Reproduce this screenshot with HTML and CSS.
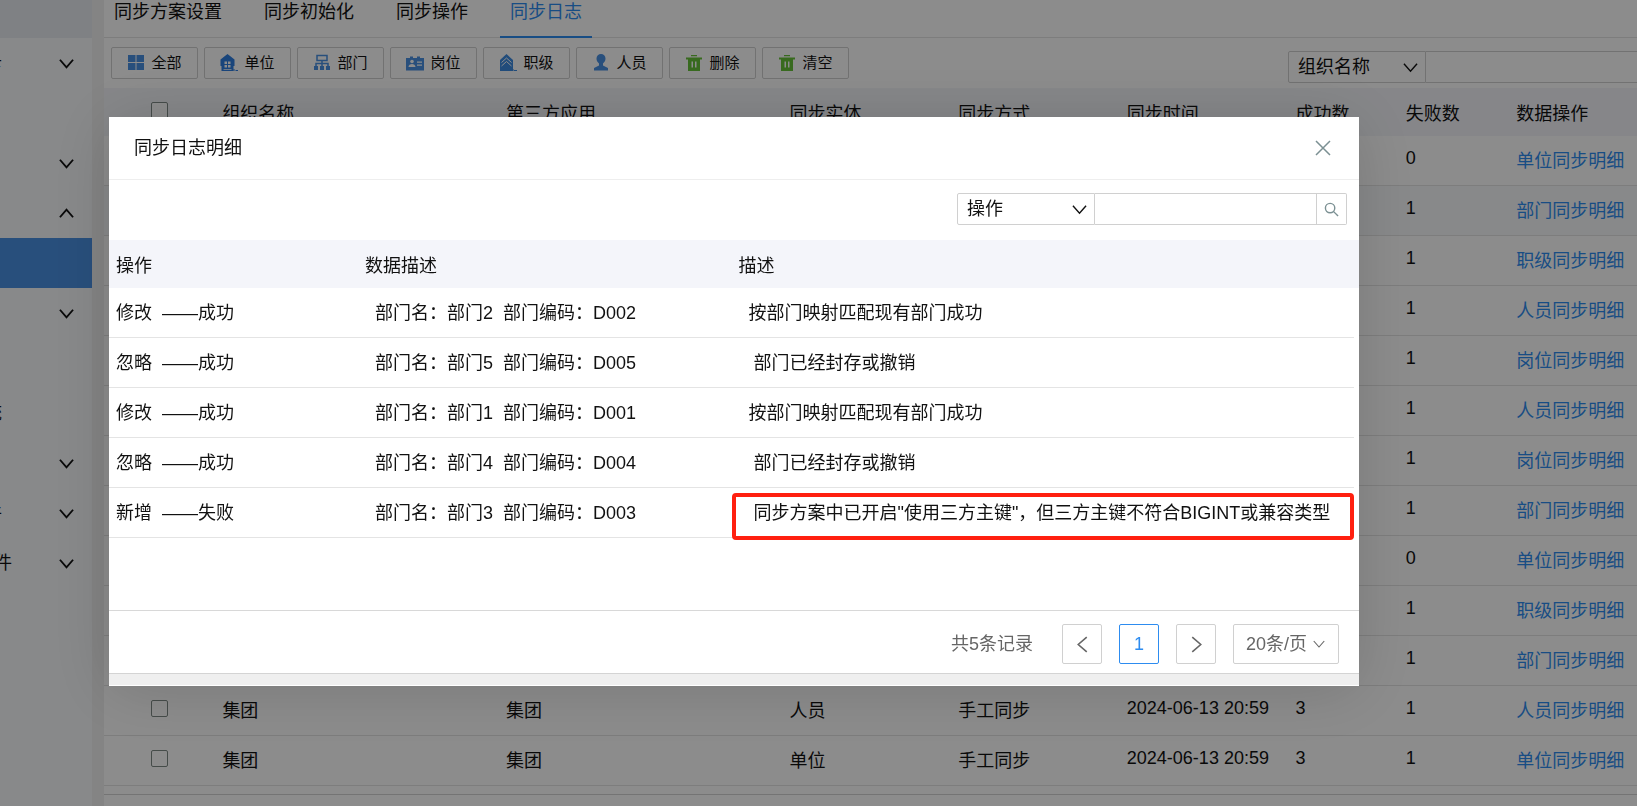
FILE: index.html
```html
<!DOCTYPE html>
<html lang="zh-CN">
  <head>
    <meta charset="UTF-8" />
    <meta name="viewport" content="width=device-width, initial-scale=1.0" />
    <title>同步日志</title>
    <link rel="stylesheet" href="styles.css">
  </head>
  <body>
    <!-- 公用图标 -->
    <svg class="symbols" aria-hidden="true">
      <symbol id="down" viewBox="0 0 16 16"><path d="M1 4 8 12 15 4" /></symbol>
      <symbol id="trash" viewBox="0 0 18 18">
        <path fill="#67c23a" d="M1 3.500h16v2H1zM6 1h6v1.200H6zM3 5.500h12V17H3z" />
        <path fill="#fff" d="M6.500 7.500h1.500v6H6.500zM10 7.500h1.500v6H10z" />
      </symbol>
    </svg>

    <div class="layout">
      <nav class="sidebar">
        <div class="side-top"></div>
        <div class="side-item"><span class="side-label cut">卡</span><svg class="arrow"><use href="#down" /></svg></div>
        <div class="side-item"></div>
        <div class="side-item"><svg class="arrow"><use href="#down" /></svg></div>
        <div class="side-item"><svg class="arrow up"><use href="#down" /></svg></div>
        <div class="side-item active"></div>
        <div class="side-item"><svg class="arrow"><use href="#down" /></svg></div>
        <div class="side-item"></div>
        <div class="side-item"><span class="side-label cut">统</span></div>
        <div class="side-item"><svg class="arrow"><use href="#down" /></svg></div>
        <div class="side-item"><span class="side-label cut">件</span><svg class="arrow"><use href="#down" /></svg></div>
        <div class="side-item"><span class="side-label">件</span><svg class="arrow"><use href="#down" /></svg></div>
      </nav>

      <main class="main">
        <div class="tabs">
          <a class="tab" href="#">同步方案设置</a>
          <a class="tab" href="#">同步初始化</a>
          <a class="tab" href="#">同步操作</a>
          <a class="tab active" href="#">同步日志</a>
        </div>

        <div class="toolbar">
          <div class="buttons">
            <button class="tool-button" type="button">
              <svg class="icon" viewBox="0 0 18 18"><path fill="#4a90e2" d="M1 1h7.500v7H1zM9.500 1H17v7H9.500zM1 9h7.500v7H1zM9.500 9H17v7H9.500z" /></svg>全部
            </button>
            <button class="tool-button" type="button">
              <svg class="icon" viewBox="0 0 18 18"><path fill="#2f7ee0" d="M7.500 0 .5 5.500V12h1v5h12v-5h1V5.500z" /><path fill="#fff" d="M4.500 7.500H7V10H4.500zM8 7.500h2.500V10H8zM4.500 11H7v2.500H4.500zM8 11h2.500v2.500H8zM3.500 15h8v.8h-8z" /><path fill="#2f7ee0" d="M13 15.500h2v1h-2zM15.500 16H18v1h-2.500z" /></svg>单位
            </button>
            <button class="tool-button" type="button">
              <svg class="icon" viewBox="0 0 18 18"><path fill="none" stroke="#4a90e2" stroke-width="1.500" d="M4 1.500h10v5H4zM9 6.500V13M3 13V9.500h12V13" /><path fill="#4a90e2" d="M1 12h4v4H1zM7 12h4v4H7zM13 12h4v4h-4z" /></svg>部门
            </button>
            <button class="tool-button" type="button">
              <svg class="icon" viewBox="0 0 18 18"><path fill="#4a90e2" d="M0 4h4V2.500h3V4h4V2.500h3V4h4v12.500H0z" /><circle cx="6" cy="7.500" r="1.800" fill="#fff" /><path fill="#fff" d="M2.500 13c0-4 7-4 7 0zM11 7.500h5v1.200h-5zM11 10.500h5v1.200h-5z" /></svg>岗位
            </button>
            <button class="tool-button" type="button">
              <svg class="icon" viewBox="0 0 18 18"><path fill="#3c8ae0" d="M7.500 0 1 6v11h13V6z" /><path fill="none" stroke="#fff" d="m2.500 8.500 5-4.500 5 4.500M2.500 12l5-4.500 5 4.500" /><path fill="#3c8ae0" d="M12 15.500h3v1h-3zM15 16h3v1h-3z" /></svg>职级
            </button>
            <button class="tool-button" type="button">
              <svg class="icon" viewBox="0 0 18 18"><path fill="#4a90e2" d="M9 0a4.500 4.500 0 0 1 4.500 4.500c0 2-.8 3.500-2.500 5v2l5 2.500v2.500H2V14l5-2.500v-2c-1.700-1.500-2.500-3-2.500-5A4.500 4.500 0 0 1 9 0z" /></svg>人员
            </button>
            <button class="tool-button" type="button"><svg class="icon"><use href="#trash" /></svg>删除</button>
            <button class="tool-button" type="button"><svg class="icon"><use href="#trash" /></svg>清空</button>
          </div>
          <div class="search page-search">
            <div class="select-box">
              <select class="search-select" aria-label="搜索条件"><option>组织名称</option></select>
              <svg class="arrow"><use href="#down" /></svg>
            </div>
            <input class="search-input" type="text" aria-label="搜索内容" />
          </div>
        </div>

        <table class="log-table">
          <colgroup>
            <col class="col-check" /><col class="col-org" /><col class="col-org" />
            <col class="col-mid" /><col class="col-mid" /><col class="col-mid" />
            <col class="col-num" /><col class="col-num" /><col />
          </colgroup>
          <thead>
            <tr>
              <th class="check"><input type="checkbox" aria-label="全选" /></th>
              <th>组织名称</th><th>第三方应用</th><th>同步实体</th><th>同步方式</th><th>同步时间</th><th>成功数</th><th>失败数</th><th>数据操作</th>
            </tr>
          </thead>
          <tbody id="logRows"></tbody>
        </table>
        <div class="table-end"></div>
      </main>
    </div>

    <!-- 明细弹窗 -->
    <div class="mask">
      <div class="dialog" role="dialog" aria-labelledby="dialogTitle">
        <div class="dialog-header">
          <div id="dialogTitle">同步日志明细</div>
          <button class="close" type="button" aria-label="关闭">
            <svg viewBox="0 0 16 16"><path d="m1 1 14 14M15 1 1 15" /></svg>
          </button>
        </div>
        <div class="dialog-tools">
          <div class="search">
            <div class="select-box">
              <select class="search-select" aria-label="明细搜索条件"><option>操作</option></select>
              <svg class="arrow"><use href="#down" /></svg>
            </div>
            <input class="search-input" type="text" aria-label="明细搜索内容" />
            <button class="search-button" type="button" aria-label="搜索">
              <svg viewBox="0 0 16 16"><circle cx="6.500" cy="6.500" r="5" /><path d="m10 10 5 5" /></svg>
            </button>
          </div>
        </div>
        <div class="dialog-body">
          <table class="detail-table">
            <colgroup><col class="col-action" /><col class="col-data" /><col /></colgroup>
            <thead>
              <tr><th>操作</th><th>数据描述</th><th>描述</th></tr>
            </thead>
            <tbody>
              <tr><td>修改&nbsp; ——成功</td><td>&nbsp; 部门名：部门2&nbsp; 部门编码：D002</td><td>&nbsp; 按部门映射匹配现有部门成功</td></tr>
              <tr><td>忽略&nbsp; ——成功</td><td>&nbsp; 部门名：部门5&nbsp; 部门编码：D005</td><td>&nbsp;&nbsp; 部门已经封存或撤销</td></tr>
              <tr><td>修改&nbsp; ——成功</td><td>&nbsp; 部门名：部门1&nbsp; 部门编码：D001</td><td>&nbsp; 按部门映射匹配现有部门成功</td></tr>
              <tr><td>忽略&nbsp; ——成功</td><td>&nbsp; 部门名：部门4&nbsp; 部门编码：D004</td><td>&nbsp;&nbsp; 部门已经封存或撤销</td></tr>
              <tr><td>新增&nbsp; ——失败</td><td>&nbsp; 部门名：部门3&nbsp; 部门编码：D003</td><td class="marked">&nbsp;&nbsp; 同步方案中已开启"使用三方主键"，但三方主键不符合BIGINT或兼容类型</td></tr>
            </tbody>
          </table>
        </div>
        <div class="pager">
          <span class="total">共5条记录</span>
          <button class="page-button" type="button" aria-label="上一页"><svg class="arrow prev"><use href="#down" /></svg></button>
          <button class="page-button current" type="button">1</button>
          <button class="page-button" type="button" aria-label="下一页"><svg class="arrow next"><use href="#down" /></svg></button>
          <div class="select-box page-size">
            <select aria-label="每页条数"><option>20条/页</option></select>
            <svg class="arrow"><use href="#down" /></svg>
          </div>
        </div>
        <div class="dialog-footer"></div>
      </div>
    </div>

    <script>
      // 实体、成功数、失败数
      const logs = [
        ["单位", 3, 0],
        ["部门", 3, 1],
        ["职级", 3, 1],
        ["人员", 3, 1],
        ["岗位", 3, 1],
        ["人员", 3, 1],
        ["岗位", 3, 1],
        ["部门", 3, 1],
        ["单位", 3, 0],
        ["职级", 3, 1],
        ["部门", 3, 1],
        ["人员", 3, 1],
        ["单位", 3, 1],
      ];
      document.getElementById("logRows").innerHTML = logs
        .map(
          ([entity, success, fail], index) => `
        <tr class="${index === 1 ? "hover" : ""}">
          <td class="check"><input type="checkbox" aria-label="选择" /></td>
          <td>集团</td>
          <td>集团</td>
          <td>${entity}</td>
          <td>手工同步</td>
          <td class="num">2024-06-13 20:59</td>
          <td class="num">${success}</td>
          <td class="num">${fail}</td>
          <td><a href="#">${entity}同步明细</a></td>
        </tr>`
        )
        .join("");
    </script>
  </body>
</html>
```

FILE: styles.css
```css
* {
  box-sizing: border-box;
}
body {
  margin: 0;
  height: 100vh;
  overflow: hidden;
  font-family: "Liberation Sans", "Noto Sans CJK SC", sans-serif;
  font-size: 18px;
  line-height: 24px;
  color: #111;
  background: #fff;
}
button,
input,
select {
  margin: 0;
  font: inherit;
  color: inherit;
}
a {
  color: #2d8cf0;
  text-decoration: none;
}
.symbols {
  display: none;
}
.arrow {
  width: 15px;
  height: 15px;
  fill: none;
  stroke: currentColor;
  stroke-width: 2;
}
.up {
  transform: rotate(180deg);
}

/* 页面 */
.layout {
  display: flex;
  min-height: 100vh;
  background: #f0f0f0;
}
.sidebar {
  width: 92px;
  margin-right: 12px;
  flex-shrink: 0;
  background: #f7f9fc;
}
.side-top {
  height: 38px;
  background: #e8ebf0;
}
.side-item {
  display: flex;
  align-items: center;
  height: 50px;
  padding-right: 18px;
}
.side-item.active {
  background: #4a90e2;
}
.side-item .arrow {
  margin-left: auto;
}
.side-label {
  display: flex;
  justify-content: flex-end;
  width: 12px;
  overflow: hidden;
}
.side-label.cut {
  width: 2px;
}
.main {
  flex: 1;
  min-width: 0;
  background: #fff;
}
.tabs {
  display: flex;
  gap: 22px;
  height: 38px;
  border-bottom: 1px solid #e4e4e4;
}
.tab {
  height: 38px;
  padding: 0 10px;
  color: #111;
}
.tab.active {
  color: #2d8cf0;
  border-bottom: 2px solid #2d8cf0;
}
.toolbar {
  display: flex;
  justify-content: space-between;
  height: 50px;
  padding: 9px 0 0 7px;
}
.buttons {
  display: flex;
  gap: 6px;
}
.tool-button {
  display: flex;
  align-items: center;
  justify-content: center;
  gap: 6px;
  width: 87px;
  height: 32px;
  padding: 0;
  font-size: 15px;
  background: #fff;
  border: 1px solid #d0d0d0;
  border-radius: 2px;
}
.icon {
  width: 18px;
  height: 18px;
}
.page-search {
  margin-top: 4px;
}

/* 搜索框 */
.search {
  display: flex;
  height: 32px;
}
.select-box {
  position: relative;
  width: 138px;
}
.select-box select {
  width: 100%;
  height: 100%;
  padding: 0 9px;
  appearance: none;
  background: #fff;
  border: 1px solid #d0d0d0;
  border-radius: 2px 0 0 2px;
}
.select-box .arrow {
  position: absolute;
  top: 9px;
  right: 8px;
  stroke-width: 1.5;
  pointer-events: none;
}
.search-input {
  width: 222px;
  border: 1px solid #d0d0d0;
  border-left: 0;
}
.page-search .search-input {
  width: 211px;
  border-right: 0;
}
.search-button {
  width: 30px;
  padding: 0 7px;
  line-height: 0;
  background: #fff;
  border: 1px solid #d0d0d0;
  border-left: 0;
  border-radius: 0 2px 2px 0;
}
.search-button svg {
  width: 15px;
  height: 15px;
  fill: none;
  stroke: #7b9093;
  stroke-width: 1.5;
}

/* 表格 */
table {
  width: 100%;
  table-layout: fixed;
  border-collapse: separate;
  border-spacing: 0;
}
th {
  height: 48px;
  padding: 4px 0 0 8px;
  font-weight: normal;
  text-align: left;
  background: #f4f5fa;
}
td {
  height: 50px;
  padding: 0 0 0 8px;
  white-space: nowrap;
  border-bottom: 1px solid #e4e4e4;
}
.hover td {
  background: #f7f9fc;
}
.log-table .check {
  padding: 0 0 6px;
  text-align: center;
}
.log-table .num {
  padding-bottom: 6px;
}
.log-table input {
  width: 17px;
  height: 17px;
  vertical-align: middle;
  appearance: none;
  background: #fff;
  border: 1px solid #7f8a86;
  border-radius: 2px;
}
.col-check,
.col-num {
  width: 7.2%;
}
.col-org {
  width: 18.5%;
}
.col-mid {
  width: 11%;
}
.table-end {
  height: 9px;
  border-bottom: 1px solid #d4d4d4;
}

/* 弹窗 */
.mask {
  position: fixed;
  inset: 0;
  padding: 117px 278px 0 109px;
  background: rgba(0, 0, 0, 0.45);
}
.dialog {
  background: #fff;
  box-shadow: 0 4px 60px rgba(0, 0, 0, 0.15);
}
.dialog-header {
  display: flex;
  align-items: center;
  justify-content: space-between;
  height: 63px;
  padding: 0 28px 0 25px;
  border-bottom: 1px solid #eee;
}
.close {
  padding: 0;
  line-height: 0;
  background: none;
  border: 0;
}
.close svg {
  width: 16px;
  height: 16px;
  fill: none;
  stroke: #7b9093;
  stroke-width: 1.5;
}
.dialog-tools {
  display: flex;
  justify-content: flex-end;
  height: 60px;
  padding: 13px 12px 0;
}
.dialog-body {
  height: 371px;
  background: linear-gradient(#f4f5fa 48px, #fff 48px);
  border-bottom: 1px solid #d8d8d8;
}
.detail-table {
  width: calc(100% - 5px);
}
.detail-table th,
.detail-table td {
  padding-left: 7px;
}
.col-action {
  width: 20%;
}
.col-data {
  width: 30%;
}
.marked {
  position: relative;
}
.marked::after {
  content: "";
  position: absolute;
  inset: 5px 0 -3px;
  border: 4px solid #ff2010;
  border-radius: 4px;
}
.pager {
  display: flex;
  align-items: center;
  justify-content: flex-end;
  gap: 17px;
  height: 62px;
  padding: 4px 20px 0;
  color: #666;
}
.total {
  margin-right: 12px;
}
.page-button {
  display: flex;
  align-items: center;
  justify-content: center;
  width: 40px;
  height: 40px;
  padding: 0;
  background: #fff;
  border: 1px solid #d0d0d0;
  border-radius: 2px;
}
.page-button.current {
  color: #2d8cf0;
  border-color: #2d8cf0;
}
.page-button .arrow {
  width: 17px;
  height: 17px;
  stroke-width: 1.5;
}
.prev {
  transform: rotate(90deg);
}
.next {
  transform: rotate(-90deg);
}
.page-size {
  width: 106px;
  height: 40px;
}
.page-size select {
  padding: 0 12px;
  border-radius: 2px;
}
.page-size .arrow {
  top: 14px;
  right: 14px;
  width: 12px;
  height: 12px;
}
.dialog-footer {
  height: 13px;
  background: #efefef;
  border-top: 1px solid #d4d4d4;
  border-bottom: 1px solid #fff;
}
```
